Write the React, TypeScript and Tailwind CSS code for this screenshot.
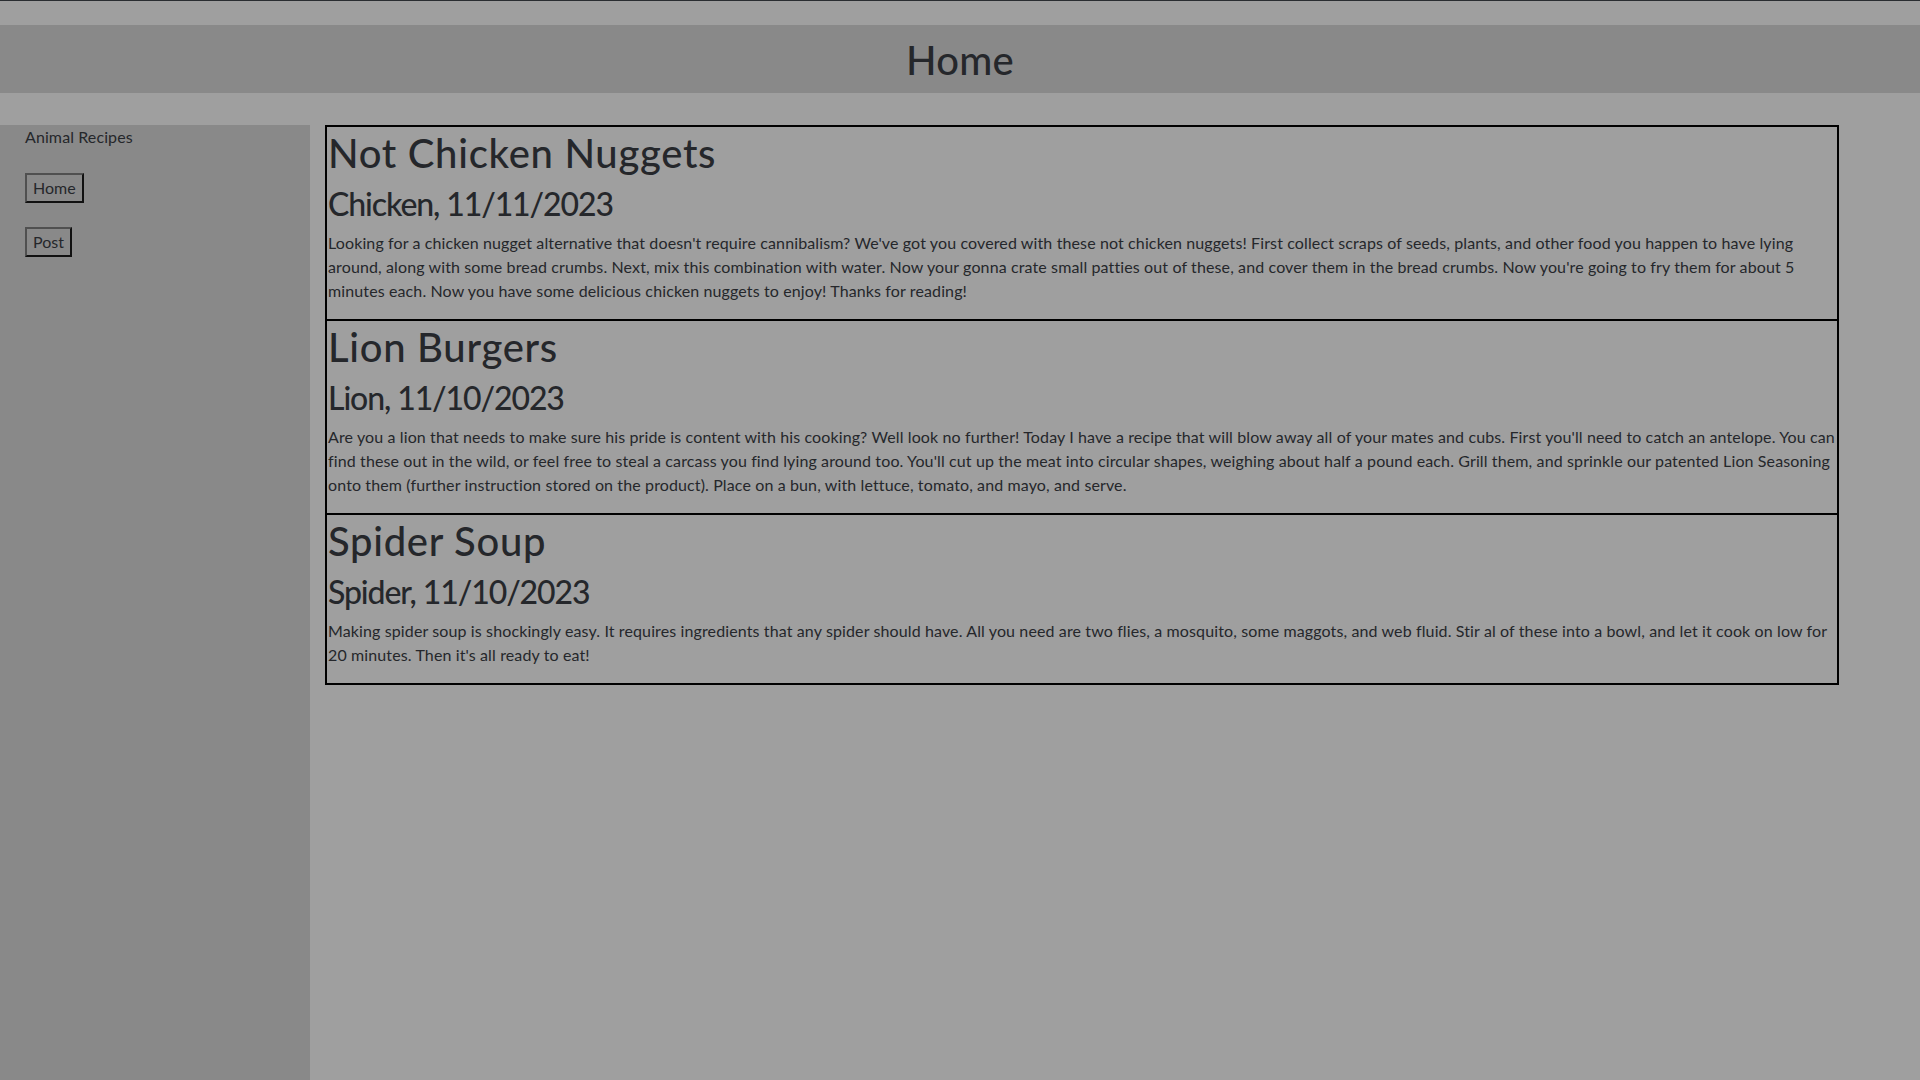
import React from "react";

const posts = [
  {
    title: "Not Chicken Nuggets",
    sub: "Chicken, 11/11/2023",
    body: "Looking for a chicken nugget alternative that doesn't require cannibalism? We've got you covered with these not chicken nuggets! First collect scraps of seeds, plants, and other food you happen to have lying around, along with some bread crumbs. Next, mix this combination with water. Now your gonna crate small patties out of these, and cover them in the bread crumbs. Now you're going to fry them for about 5 minutes each. Now you have some delicious chicken nuggets to enjoy! Thanks for reading!",
  },
  {
    title: "Lion Burgers",
    sub: "Lion, 11/10/2023",
    body: "Are you a lion that needs to make sure his pride is content with his cooking? Well look no further! Today I have a recipe that will blow away all of your mates and cubs. First you'll need to catch an antelope. You can find these out in the wild, or feel free to steal a carcass you find lying around too. You'll cut up the meat into circular shapes, weighing about half a pound each. Grill them, and sprinkle our patented Lion Seasoning onto them (further instruction stored on the product). Place on a bun, with lettuce, tomato, and mayo, and serve.",
  },
  {
    title: "Spider Soup",
    sub: "Spider, 11/10/2023",
    body: "Making spider soup is shockingly easy. It requires ingredients that any spider should have. All you need are two flies, a mosquito, some maggots, and web fluid. Stir al of these into a bowl, and let it cook on low for 20 minutes. Then it's all ready to eat!",
  },
];

export default function App() {
  return (
    <div
      className="min-h-screen h-[1080px] overflow-hidden bg-[#9f9f9f] text-[#25272b] flex flex-col"
      style={{ fontFamily: "Lato, 'Noto Sans', sans-serif" }}
    >
      <div className="h-px bg-[#2a2d31]" />
      <div className="h-[24px]" />
      <header className="h-[68px] bg-[#898989] flex items-center justify-center">
        <h1 className="text-[40px] leading-[48px] font-medium pt-[2px] tracking-[0.3px]">Home</h1>
      </header>
      <div className="h-[32px]" />
      <div className="flex flex-1 min-h-0">
        <aside className="w-[310px] bg-[#898989] pl-[25px]">
          <div className="text-[16px] leading-[24px] tracking-[0.1px]">Animal Recipes</div>
          <div className="mt-[24px] flex flex-col items-start gap-[24px]">
            <button className="h-[30px] px-[6px] text-[16px] leading-[24px] border-2 border-t-[#505050] border-l-[#505050] border-r-[#111] border-b-[#111] bg-[#898989]">
              Home
            </button>
            <button className="h-[30px] px-[6px] text-[16px] leading-[24px] border-2 border-t-[#505050] border-l-[#505050] border-r-[#111] border-b-[#111] bg-[#898989]">
              Post
            </button>
          </div>
        </aside>
        <main className="flex-1 pl-[15px] pr-[81px]">
          <div className="border-2 border-black border-b-0">
            {posts.map((p) => (
              <article key={p.title} className="border-b-2 border-black pl-px pt-[2px]">
                <h1 className="text-[40px] leading-[48px] font-medium mb-2 tracking-[0.7px]">{p.title}</h1>
                <h2 className="text-[32px] leading-[38px] font-medium mb-2 tracking-[-1.1px]">{p.sub}</h2>
                <p className="text-[16px] leading-[24px] mb-4 tracking-[0.12px]">{p.body}</p>
              </article>
            ))}
          </div>
        </main>
      </div>
    </div>
  );
}
